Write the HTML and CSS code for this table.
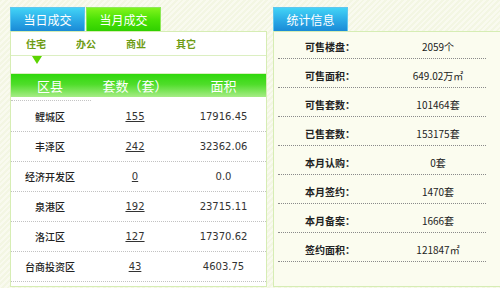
FILE: index.html
```html
<!DOCTYPE html>
<html lang="zh-CN">
<head>
<meta charset="utf-8">
<title>成交统计</title>
<link rel="stylesheet" href="styles.css">
</head>
<body>
<div class="page">
  <section class="col col-left">
    <div class="tabs">
      <span class="tab tab-blue">当日成交</span>
      <span class="tab tab-green">当月成交</span>
    </div>
    <div class="panel panel-left">
      <nav class="subtabs">
        <span class="subtab">住宅</span>
        <span class="subtab">办公</span>
        <span class="subtab">商业</span>
        <span class="subtab">其它</span>
      </nav>
      <div class="pointer-row"><span class="pointer"></span></div>
      <div class="thead grid">
        <span>区县</span><span>套数（套）</span><span>面积</span>
      </div>
      <div class="spacer"></div>
      <div class="trow grid"><span class="cn">鲤城区</span><a class="num link">155</a><span class="num">17916.45</span></div>
      <div class="trow grid"><span class="cn">丰泽区</span><a class="num link">242</a><span class="num">32362.06</span></div>
      <div class="trow grid"><span class="cn">经济开发区</span><a class="num link">0</a><span class="num">0.0</span></div>
      <div class="trow grid"><span class="cn">泉港区</span><a class="num link">192</a><span class="num">23715.11</span></div>
      <div class="trow grid"><span class="cn">洛江区</span><a class="num link">127</a><span class="num">17370.62</span></div>
      <div class="trow grid"><span class="cn">台商投资区</span><a class="num link">43</a><span class="num">4603.75</span></div>
    </div>
  </section>
  <section class="col col-right">
    <div class="tabs">
      <span class="tab tab-blue">统计信息</span>
    </div>
    <div class="panel panel-right">
      <div class="srow"><span class="label">可售楼盘：</span><span class="value">2059个</span></div>
      <div class="srow"><span class="label">可售面积：</span><span class="value">649.02万㎡</span></div>
      <div class="srow"><span class="label">可售套数：</span><span class="value">101464套</span></div>
      <div class="srow"><span class="label">已售套数：</span><span class="value">153175套</span></div>
      <div class="srow"><span class="label">本月认购：</span><span class="value">0套</span></div>
      <div class="srow"><span class="label">本月签约：</span><span class="value">1470套</span></div>
      <div class="srow"><span class="label">本月备案：</span><span class="value">1666套</span></div>
      <div class="srow"><span class="label">签约面积：</span><span class="value">121847㎡</span></div>
    </div>
  </section>
</div>
</body>
</html>
```

FILE: styles.css
```css
html, body {
  margin: 0;
  padding: 0;
}
body {
  width: 500px;
  height: 288px;
  overflow: hidden;
  font-family: "Noto Sans CJK SC", "DejaVu Sans", sans-serif;
  color: #222;
  background-color: #f6f8ea;
  background-image: repeating-linear-gradient(135deg, #f3f6e3 0 2px, #f9faef 2px 4px);
}
.page {
  display: flex;
  align-items: stretch;
  gap: 6px;
  padding: 7px 0 0 10px;
  box-sizing: border-box;
  height: 287px;
}
.col {
  display: flex;
  flex-direction: column;
}
.col-left { width: 257px; flex: none; }
.col-right { width: 232px; flex: none; }

.tabs {
  display: flex;
  gap: 1px;
  height: 24px;
}
.tab {
  width: 75px;
  height: 24px;
  line-height: 24px;
  text-align: center;
  font-size: 12px;
  color: #fff;
  box-sizing: border-box;
}
.tab-blue {
  background: linear-gradient(#42d3f6, #2aa9e6 55%, #1a8ad6);
  border: 1px solid #5fc6ee;
  border-bottom: none;
}
.tab-green {
  background: linear-gradient(#80f41c, #4be206 50%, #30d000);
  border: 1px solid #8ee858;
  border-bottom: none;
}

.panel {
  flex: 1;
  border: 1px solid #d6edb4;
}
.panel-left {
  background: #fff;
  padding-bottom: 3px;
}
.subtabs {
  display: flex;
  height: 23px;
  align-items: center;
  padding-left: 15px;
  border-bottom: 1px solid #dcefc2;
}
.subtab {
  width: 50px;
  font-size: 10px;
  font-weight: 700;
  color: #6e9c14;
}
.pointer-row {
  height: 17px;
  border-bottom: 1px solid #dcefc2;
  padding-left: 21px;
}
.pointer {
  display: block;
  width: 0;
  height: 0;
  border-left: 5px solid transparent;
  border-right: 5px solid transparent;
  border-top: 8px solid #5bd400;
}
.grid {
  display: grid;
  grid-template-columns: 78px 92px 85px;
  align-items: center;
  text-align: center;
}
.thead {
  height: 23px;
  background: linear-gradient(#2fd80c, #4fdd2a 45%, #a6ec86);
  color: #fff;
  font-size: 13px;
  line-height: 23px;
}
.spacer {
  width: 80px;
  height: 3px;
  border-bottom: 1px dotted #c4c4c4;
  margin-bottom: 1px;
}
.trow {
  height: 29px;
  border-bottom: 1px dotted #c2c2c2;
  font-size: 10px;
  color: #333;
}
.cn {
  font-family: "Noto Sans CJK SC", sans-serif;
  color: #222;
  font-weight: 500;
}
.num {
  font-family: "DejaVu Sans", sans-serif;
  font-size: 10px;
  color: #333;
}
.link {
  text-decoration: underline;
  color: #333;
}

.panel-right {
  background: #fbfcef;
}
.srow {
  display: grid;
  grid-template-columns: 104px 104px;
  margin: 0 4px;
  width: 208px;
  padding: 9px 0 3px;
  line-height: 16px;
  border-bottom: 1px dotted #8a8a8a;
  font-size: 10px;
}
.srow:first-child {
  padding-top: 7px;
}
.label {
  text-align: center;
  font-weight: 600;
  color: #222;
}
.value {
  text-align: center;
  padding-left: 8px;
  color: #222;
}
```
